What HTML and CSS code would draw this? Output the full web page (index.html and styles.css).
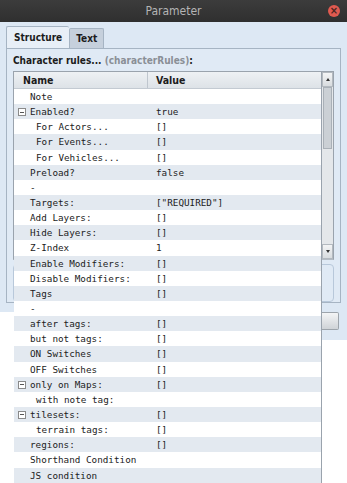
FILE: index.html
```html
<!DOCTYPE html>
<html lang="en">
<head>
    <meta charset="UTF-8">
    <title>Parameter</title>
    <link rel="stylesheet" href="styles.css">
</head>
<body>
    <div class="titlebar">
        <span class="title">Parameter</span>
        <span class="close">&#215;</span>
    </div>
    <div class="dialog">
        <div class="tabs">
            <div class="tab active">Structure</div>
            <div class="tab">Text</div>
        </div>
        <div class="panel">
            <div class="label">Character rules... <span class="key">(characterRules)</span>:</div>
            <div class="table">
                <div class="tree">
                    <div class="head">
                        <div class="col-name">Name</div>
                        <div class="col-value">Value</div>
                    </div>
                    <div class="row"><div class="col-name l1">Note</div><div class="col-value"></div></div>
                    <div class="row"><div class="col-name l1"><span class="exp"></span>Enabled?</div><div class="col-value">true</div></div>
                    <div class="row"><div class="col-name l2">For Actors...</div><div class="col-value">[]</div></div>
                    <div class="row"><div class="col-name l2">For Events...</div><div class="col-value">[]</div></div>
                    <div class="row"><div class="col-name l2">For Vehicles...</div><div class="col-value">[]</div></div>
                    <div class="row"><div class="col-name l1">Preload?</div><div class="col-value">false</div></div>
                    <div class="row"><div class="col-name l1">-</div><div class="col-value"></div></div>
                    <div class="row"><div class="col-name l1">Targets:</div><div class="col-value">["REQUIRED"]</div></div>
                    <div class="row"><div class="col-name l1">Add Layers:</div><div class="col-value">[]</div></div>
                    <div class="row"><div class="col-name l1">Hide Layers:</div><div class="col-value">[]</div></div>
                    <div class="row"><div class="col-name l1">Z-Index</div><div class="col-value">1</div></div>
                    <div class="row"><div class="col-name l1">Enable Modifiers:</div><div class="col-value">[]</div></div>
                    <div class="row"><div class="col-name l1">Disable Modifiers:</div><div class="col-value">[]</div></div>
                    <div class="row"><div class="col-name l1">Tags</div><div class="col-value">[]</div></div>
                    <div class="row"><div class="col-name l1">-</div><div class="col-value"></div></div>
                    <div class="row"><div class="col-name l1">after tags:</div><div class="col-value">[]</div></div>
                    <div class="row"><div class="col-name l1">but not tags:</div><div class="col-value">[]</div></div>
                    <div class="row"><div class="col-name l1">ON Switches</div><div class="col-value">[]</div></div>
                    <div class="row"><div class="col-name l1">OFF Switches</div><div class="col-value">[]</div></div>
                    <div class="row"><div class="col-name l1"><span class="exp"></span>only on Maps:</div><div class="col-value">[]</div></div>
                    <div class="row"><div class="col-name l2">with note tag:</div><div class="col-value"></div></div>
                    <div class="row"><div class="col-name l1"><span class="exp"></span>tilesets:</div><div class="col-value">[]</div></div>
                    <div class="row"><div class="col-name l2">terrain tags:</div><div class="col-value">[]</div></div>
                    <div class="row"><div class="col-name l1">regions:</div><div class="col-value">[]</div></div>
                    <div class="row"><div class="col-name l1">Shorthand Condition</div><div class="col-value"></div></div>
                    <div class="row"><div class="col-name l1">JS condition</div><div class="col-value"></div></div>
                </div>
                <div class="scrollbar">
                    <div class="arrow up"></div>
                    <div class="track"><div class="thumb"></div></div>
                    <div class="arrow down"></div>
                </div>
            </div>
            <div class="desc"></div>
        </div>
    </div>
    <div class="footer">
        <div class="blank"></div>
        <div class="actions">
            <button class="button">OK</button>
        </div>
    </div>
</body>
</html>
```

FILE: styles.css
```css
body {
    margin: 0;
    width: 347px;
    height: 483px;
    overflow: hidden;
    background: white;
    font-family: "DejaVu Sans Condensed", "DejaVu Sans", sans-serif;
    color: #1c1c1c;
}
.titlebar {
    height: 22px;
    background: linear-gradient(#3c3c3c, #2f2f2f);
    display: flex;
    align-items: center;
    justify-content: center;
    position: relative;
}
.title {
    color: #b4b4b4;
    font-size: 12px;
}
.close {
    position: absolute;
    right: 7px;
    top: 5px;
    width: 12px;
    height: 12px;
    border-radius: 50%;
    background: #e05a50;
    color: #4a2420;
    font-size: 11px;
    line-height: 12px;
    text-align: center;
    font-weight: bold;
}
.dialog {
    height: 290px;
    background: #dde8f4;
    padding: 5px 6px 0 6px;
    box-sizing: border-box;
}
.tabs {
    display: flex;
    align-items: flex-end;
    height: 21px;
}
.tab {
    font-size: 10px;
    font-weight: bold;
    padding: 0 6px;
    height: 19px;
    line-height: 19px;
    background: #c6d0dc;
    border: 1px solid #a6b4c3;
    border-bottom: none;
    border-radius: 2px 2px 0 0;
}
.tab.active {
    height: 21px;
    line-height: 21px;
    padding: 0 7px;
    background: #e8eff7;
    border-right: none;
}
.panel {
    height: 255px;
    border: 1px solid #a6b4c3;
    background: #e0eaf5;
    padding: 4px 6px 0 6px;
    box-sizing: border-box;
}
.label {
    font-size: 10px;
    font-weight: bold;
    height: 17px;
    line-height: 15px;
}
.key {
    color: #8a8f96;
}
.table {
    height: 187px;
    border: 1px solid #9aa3ad;
    border-bottom: 1px solid #b4bcc5;
    background: white;
    display: flex;
    position: relative;
    z-index: 1;
    margin-top: 1px;
}
.tree {
    width: 307px;
    flex-shrink: 0;
    background: white;
    border-right: 1px solid #9aa3ad;
    border-bottom: 1px solid #9aa3ad;
    align-self: flex-start;
}
.head {
    display: flex;
    height: 17px;
    background: linear-gradient(#eef1f4, #dde2e7);
    border-bottom: 1px solid #c3cad2;
    box-sizing: border-box;
    font-weight: bold;
    font-size: 10.5px;
    line-height: 17px;
}
.head .col-name {
    padding-left: 9px;
    border-right: 1px solid #bfc6ce;
}
.row {
    display: flex;
    height: 15.15px;
    line-height: 15px;
    font-family: "DejaVu Sans Mono", monospace;
    font-size: 9.3px;
}
.row:nth-child(odd) {
    background: #e3e9f0;
}
.col-name {
    width: 134px;
    box-sizing: border-box;
    position: relative;
    white-space: nowrap;
}
.col-value {
    padding-left: 8px;
    white-space: nowrap;
}
.l1 {
    padding-left: 16px;
}
.l2 {
    padding-left: 22px;
}
.exp {
    position: absolute;
    left: 4px;
    top: 4px;
    width: 6px;
    height: 6px;
    border: 1px solid #8a8a8a;
    background: white;
}
.exp::after {
    content: "";
    position: absolute;
    left: 1px;
    top: 2.5px;
    width: 4px;
    height: 1px;
    background: #555;
}
.scrollbar {
    width: 12px;
    display: flex;
    flex-direction: column;
    background: #e4e7ea;
}
.arrow {
    height: 15px;
    background: linear-gradient(#f3f4f5, #d8dcdf);
    border: 1px solid #b3b9bf;
    box-sizing: border-box;
    position: relative;
}
.arrow::after {
    content: "";
    position: absolute;
    left: 3px;
    top: 5px;
    border-left: 2.5px solid transparent;
    border-right: 2.5px solid transparent;
}
.up::after {
    border-bottom: 3px solid #333;
}
.down::after {
    border-top: 3px solid #333;
}
.track {
    flex: 1;
    padding: 0 1px;
}
.thumb {
    height: 62px;
    background: #cbd0d5;
    border: 1px solid #a9b0b7;
    box-sizing: border-box;
}
.desc {
    height: 36px;
    margin-top: 4px;
    border: 1px solid #b8c8da;
    border-radius: 4px;
    background: #e0eaf5;
}
.footer {
    display: flex;
    height: 28px;
}
.blank {
    flex: 1;
    background: white;
}
.actions {
    width: 34px;
    background: #dde8f4;
    padding: 0 8px 0 0;
    box-sizing: border-box;
}
.button {
    display: block;
    width: 26px;
    height: 18px;
    padding: 0;
    color: transparent;
    font-size: 10px;
    background: linear-gradient(#f4f5f6, #cfd3d7);
    border: 1px solid #9da4ab;
    border-left: 2px solid #2a4f8a;
    border-radius: 2px;
}
```
